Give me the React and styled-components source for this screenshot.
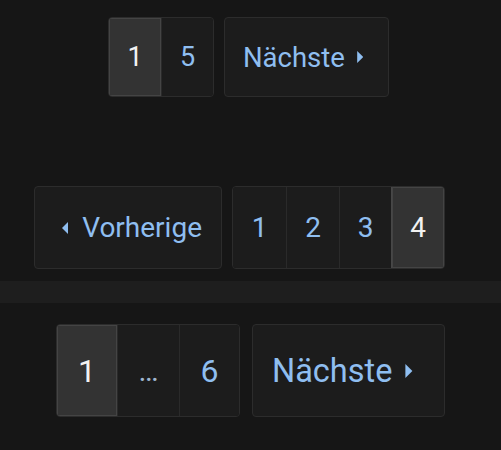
import React from 'react'
import styled, { createGlobalStyle } from 'styled-components'

const GlobalStyle = createGlobalStyle`
  *, *::before, *::after {
    box-sizing: border-box;
  }
  html, body {
    margin: 0;
    background: #161616;
    font-family: Roboto, "Liberation Sans", sans-serif;
  }
`

const Page = styled.div`
  width: 501px;
  height: 450px;
  display: flex;
  flex-direction: column;
  background: #161616;
`

const Row = styled.div`
  display: flex;
  justify-content: center;
  gap: ${(p) => p.$gap}px;
  height: ${(p) => p.$height}px;
  margin-top: ${(p) => p.$top}px;
  padding-right: ${(p) => p.$shift || 0}px;
`

const Divider = styled.div`
  height: 22px;
  margin-top: 12px;
  background: #1e1e1e;
`

const Group = styled.div`
  display: flex;
  border: 1px solid #2c2c2c;
  border-radius: 4px;
  overflow: hidden;
  background: #1c1c1c;
`

const Cell = styled.div`
  width: ${(p) => p.$width}px;
  display: flex;
  align-items: center;
  justify-content: center;
  font-size: ${(p) => p.$size}px;
  color: ${(p) => (p.$active ? '#f2f2f2' : p.$muted ? '#9fb6d0' : '#8fbef0')};
  background: ${(p) => (p.$active ? '#333333' : '#1c1c1c')};
  border-left: 1px solid ${(p) => (p.$active ? '#474747' : '#2a2a2a')};
  &:first-child {
    border-left: none;
  }
  box-shadow: ${(p) => (p.$active ? 'inset 0 0 0 1px #444' : 'none')};
`

const NavButton = styled.div`
  width: ${(p) => p.$width}px;
  display: flex;
  align-items: center;
  padding-left: ${(p) => p.$pad}px;
  gap: ${(p) => p.$gap}px;
  font-size: ${(p) => p.$size}px;
  color: #8fbef0;
  background: #1c1c1c;
  border: 1px solid #2c2c2c;
  border-radius: 4px;
`

const Arrow = ({ dir, size }) => (
  <svg width={size * 0.6} height={size} viewBox="0 0 6 10">
    {dir === 'left' ? (
      <path d="M5 0 L0 5 L5 10 Z" fill="#8fbef0" />
    ) : (
      <path d="M1 0 L6 5 L1 10 Z" fill="#8fbef0" />
    )}
  </svg>
)

const App = () => {
  return (
    <>
      <GlobalStyle />
      <Page>
        <Row $top={17} $height={80} $gap={10} $shift={4}>
          <Group>
            <Cell $width={52} $size={27} $active>1</Cell>
            <Cell $width={52} $size={27}>5</Cell>
          </Group>
          <NavButton $width={165} $pad={18} $size={27.5} $gap={11}>
            Nächste <Arrow dir='right' size={12} />
          </NavButton>
        </Row>

        <Row $top={89} $height={83} $gap={10} $shift={22}>
          <NavButton $width={188} $pad={27} $size={28} $gap={13}>
            <Arrow dir='left' size={12} /> Vorherige
          </NavButton>
          <Group>
            <Cell $width={53} $size={28}>1</Cell>
            <Cell $width={53} $size={28}>2</Cell>
            <Cell $width={52} $size={28}>3</Cell>
            <Cell $width={53} $size={28} $active>4</Cell>
          </Group>
        </Row>

        <Divider />

        <Row $top={21} $height={93} $gap={12}>
          <Group>
            <Cell $width={60} $size={32} $active>1</Cell>
            <Cell $width={62} $size={30} $muted>…</Cell>
            <Cell $width={60} $size={32}>6</Cell>
          </Group>
          <NavButton $width={193} $pad={19} $size={32.5} $gap={12}>
            Nächste <Arrow dir='right' size={14} />
          </NavButton>
        </Row>
      </Page>
    </>
  )
}

export default App
